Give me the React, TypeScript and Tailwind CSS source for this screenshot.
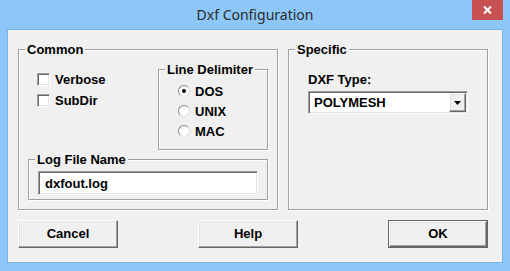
import React from 'react';

const raised = 'bg-[#f0f0f0] border border-t-white border-l-white border-r-[#696969] border-b-[#696969] shadow-[inset_-1px_-1px_0_#a0a0a0,inset_1px_1px_0_#e3e3e3]';
const sunken = 'bg-white border border-t-[#a0a0a0] border-l-[#a0a0a0] border-r-white border-b-white shadow-[inset_1px_1px_0_#696969,inset_-1px_-1px_0_#e3e3e3]';
const etched = 'relative border border-[#a0a0a0] shadow-[inset_1px_1px_0_#fff,1px_1px_0_#fff]';

function Legend({ children }: { children: React.ReactNode }) {
  return (
    <span className="absolute left-[6px] top-[-8px] px-[2px] leading-[15px] bg-[#f0f0f0] whitespace-nowrap">
      {children}
    </span>
  );
}

function Check({ label }: { label: string }) {
  return (
    <div className="flex items-center gap-[5px] h-[13px]">
      <div className={`w-[13px] h-[13px] ${sunken}`} />
      <span className="leading-[15px]">{label}</span>
    </div>
  );
}

function Radio({ label, on }: { label: string, on?: boolean }) {
  return (
    <div className="flex items-center gap-[5px] h-[12px]">
      <div className="w-[12px] h-[12px] rounded-full bg-white border border-t-[#8a8a8a] border-l-[#8a8a8a] border-r-[#e0e0e0] border-b-[#e0e0e0] flex items-center justify-center">
        {on && <div className="w-[4px] h-[4px] rounded-full bg-black" />}
      </div>
      <span className="leading-[15px]">{label}</span>
    </div>
  );
}

function Button({ label, primary }: { label: string, primary?: boolean }) {
  if (primary) {
    return (
      <div className="w-[100px] h-[28px] border border-[#646464] flex">
        <div className={`flex-1 flex items-center justify-center ${raised}`}>{label}</div>
      </div>
    );
  }
  return (
    <div className={`w-[100px] h-[28px] flex items-center justify-center ${raised}`}>{label}</div>
  );
}

export default function App() {
  return (
    <div className="w-[510px] h-[271px] bg-[#8cc7f7] flex flex-col font-['Liberation_Sans',Arial,sans-serif] text-[13px] font-bold text-black">
      {/* title bar */}
      <div className="relative h-[29px] flex items-center justify-center">
        <span className="font-['Noto_Sans',sans-serif] font-normal text-[14px] leading-[20px] text-[#2b2b2b]">Dxf Configuration</span>
        <div className="absolute right-[7px] top-0 w-[31px] h-[20px] bg-[#c75050] flex items-center justify-center">
          <svg width="9" height="8" viewBox="0 0 9 8">
            <path d="M1 0.5 L8 7.5 M8 0.5 L1 7.5" stroke="#fff" strokeWidth="2" />
          </svg>
        </div>
      </div>

      {/* client area */}
      <div className="mx-[7px] h-[234px] border border-[#7ab2e6] bg-[#f0f0f0] flex flex-col pt-[19px] px-[10px]">
        <div className="flex gap-[10px]">
          {/* Common */}
          <div className={`w-[260px] h-[161px] ${etched}`}>
            <Legend>Common</Legend>
            <div className="flex items-start">
              <div className="mt-[23px] pl-[18px] flex flex-col gap-[8px]">
                <Check label="Verbose" />
                <Check label="SubDir" />
              </div>
              <div className={`ml-auto mr-[9px] mt-[19px] w-[110px] h-[81px] ${etched}`}>
                <Legend>Line Delimiter</Legend>
                <div className="pl-[19px] pt-[15px] flex flex-col gap-[8px]">
                  <Radio label="DOS" on />
                  <Radio label="UNIX" />
                  <Radio label="MAC" />
                </div>
              </div>
            </div>
            <div className={`ml-[9px] mt-[9px] w-[240px] h-[41px] ${etched}`}>
              <Legend>Log File Name</Legend>
              <div className={`ml-[9px] mt-[11px] w-[220px] h-[24px] flex items-center pl-[6px] ${sunken}`}>
                <span className="leading-[15px]">dxfout.log</span>
              </div>
            </div>
          </div>

          {/* Specific */}
          <div className={`w-[200px] h-[161px] ${etched}`}>
            <Legend>Specific</Legend>
            <div className="ml-[19px] mt-[22px] leading-[15px]">DXF Type:</div>
            <div className={`ml-[19px] mt-[4px] w-[160px] h-[23px] flex items-stretch p-[1px] ${sunken}`}>
              <span className="flex-1 flex items-center pl-[4px] leading-[15px]">POLYMESH</span>
              <div className={`w-[17px] flex items-center justify-center ${raised}`}>
                <svg width="7" height="4" viewBox="0 0 7 4">
                  <path d="M0 0 H7 L3.5 4 Z" fill="#000" />
                </svg>
              </div>
            </div>
          </div>
        </div>

        <div className="mt-[10px] flex">
          <Button label="Cancel" />
          <div className="ml-[80px]"><Button label="Help" /></div>
          <div className="ml-[90px]"><Button label="OK" primary /></div>
        </div>
      </div>
    </div>
  );
}
